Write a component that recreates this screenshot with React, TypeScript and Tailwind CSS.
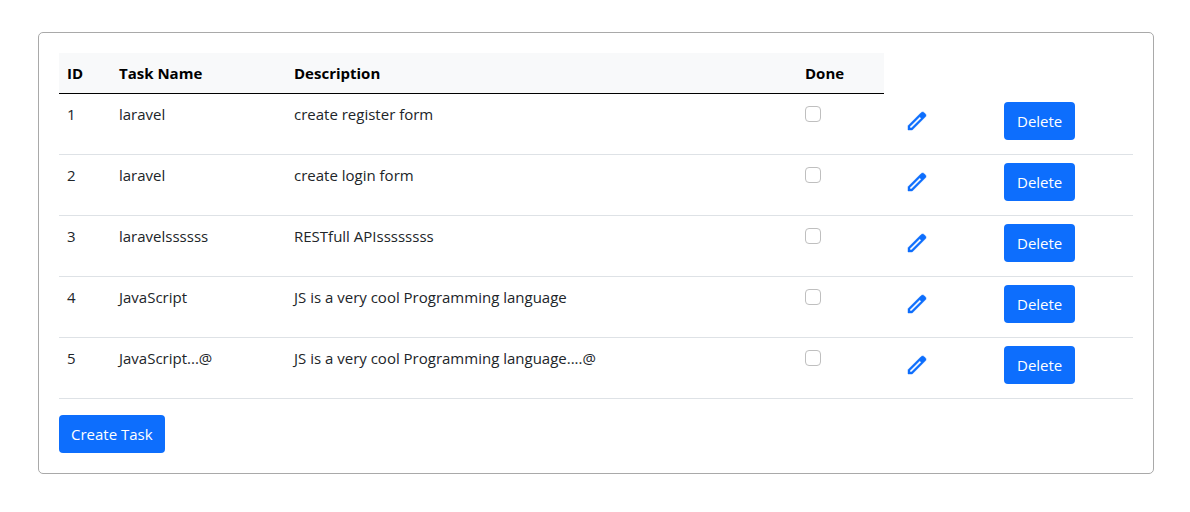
const tasks = [
  { id: 1, name: "laravel", description: "create register form" },
  { id: 2, name: "laravel", description: "create login form" },
  { id: 3, name: "laravelssssss", description: "RESTfull APIssssssss" },
  { id: 4, name: "JavaScript", description: "JS is a very cool Programming language" },
  { id: 5, name: "JavaScript...@", description: "JS is a very cool Programming language....@" },
];

function PencilIcon() {
  return (
    <svg viewBox="0 -960 960 960" className="size-6 fill-current stroke-current" strokeWidth="18" aria-hidden="true">
      <path d="M200-200h57l391-391-57-57-391 391v57Zm-80 80v-170l528-527q12-11 26.5-17t30.5-6q16 0 31 6t26 18l55 56q12 11 17.5 26t5.5 30q0 16-5.5 30.5T817-647L290-120H120Z" />
    </svg>
  );
}

const button =
  "inline-flex h-[38px] items-center justify-center rounded bg-[#0d6efd] text-white hover:bg-[#0b5ed7]";
const heading = "border-b border-black bg-[#f8f9fa] px-2 py-2 text-left font-bold text-black";

export default function App() {
  return (
    <main className="bg-white px-9 py-8 pl-[38px] font-['Open_Sans','Noto_Sans',sans-serif] text-[15px] leading-6 text-[#212529]">
      <section className="rounded-[5px] border border-[#a9a9a9] p-5">
        <table className="mb-4 w-full table-fixed border-separate border-spacing-0">
          <colgroup>
            <col className="w-[52px]" />
            <col className="w-[175px]" />
            <col />
            <col className="w-[87px]" />
            <col className="w-28" />
            <col className="w-[137px]" />
          </colgroup>
          <thead>
            <tr>
              <th scope="col" className={heading}>ID</th>
              <th scope="col" className={heading}>Task Name</th>
              <th scope="col" className={heading}>Description</th>
              <th scope="col" className={heading}>Done</th>
            </tr>
          </thead>
          <tbody>
            {tasks.map((task) => (
              <tr key={task.id} className="h-[61px] align-top *:border-b *:border-[#dee2e6] *:px-2 *:pt-2">
                <td>{task.id}</td>
                <td>{task.name}</td>
                <td>{task.description}</td>
                <td>
                  <input
                    type="checkbox"
                    aria-label={`Mark task ${task.id} as done`}
                    className="mt-1 block size-4 appearance-none rounded border border-[#bfbfbf] bg-white checked:border-[#0d6efd] checked:bg-[#0d6efd]"
                  />
                </td>
                <td>
                  <a
                    href={`#edit-${task.id}`}
                    aria-label={`Edit task ${task.id}`}
                    className="inline-flex h-[38px] items-center px-[13px] text-[#0d6efd]"
                  >
                    <PencilIcon />
                  </a>
                </td>
                <td>
                  <button type="button" className={`${button} px-[13px]`}>Delete</button>
                </td>
              </tr>
            ))}
          </tbody>
        </table>
        <a href="#create" className={`${button} px-3`}>Create Task</a>
      </section>
    </main>
  );
}
